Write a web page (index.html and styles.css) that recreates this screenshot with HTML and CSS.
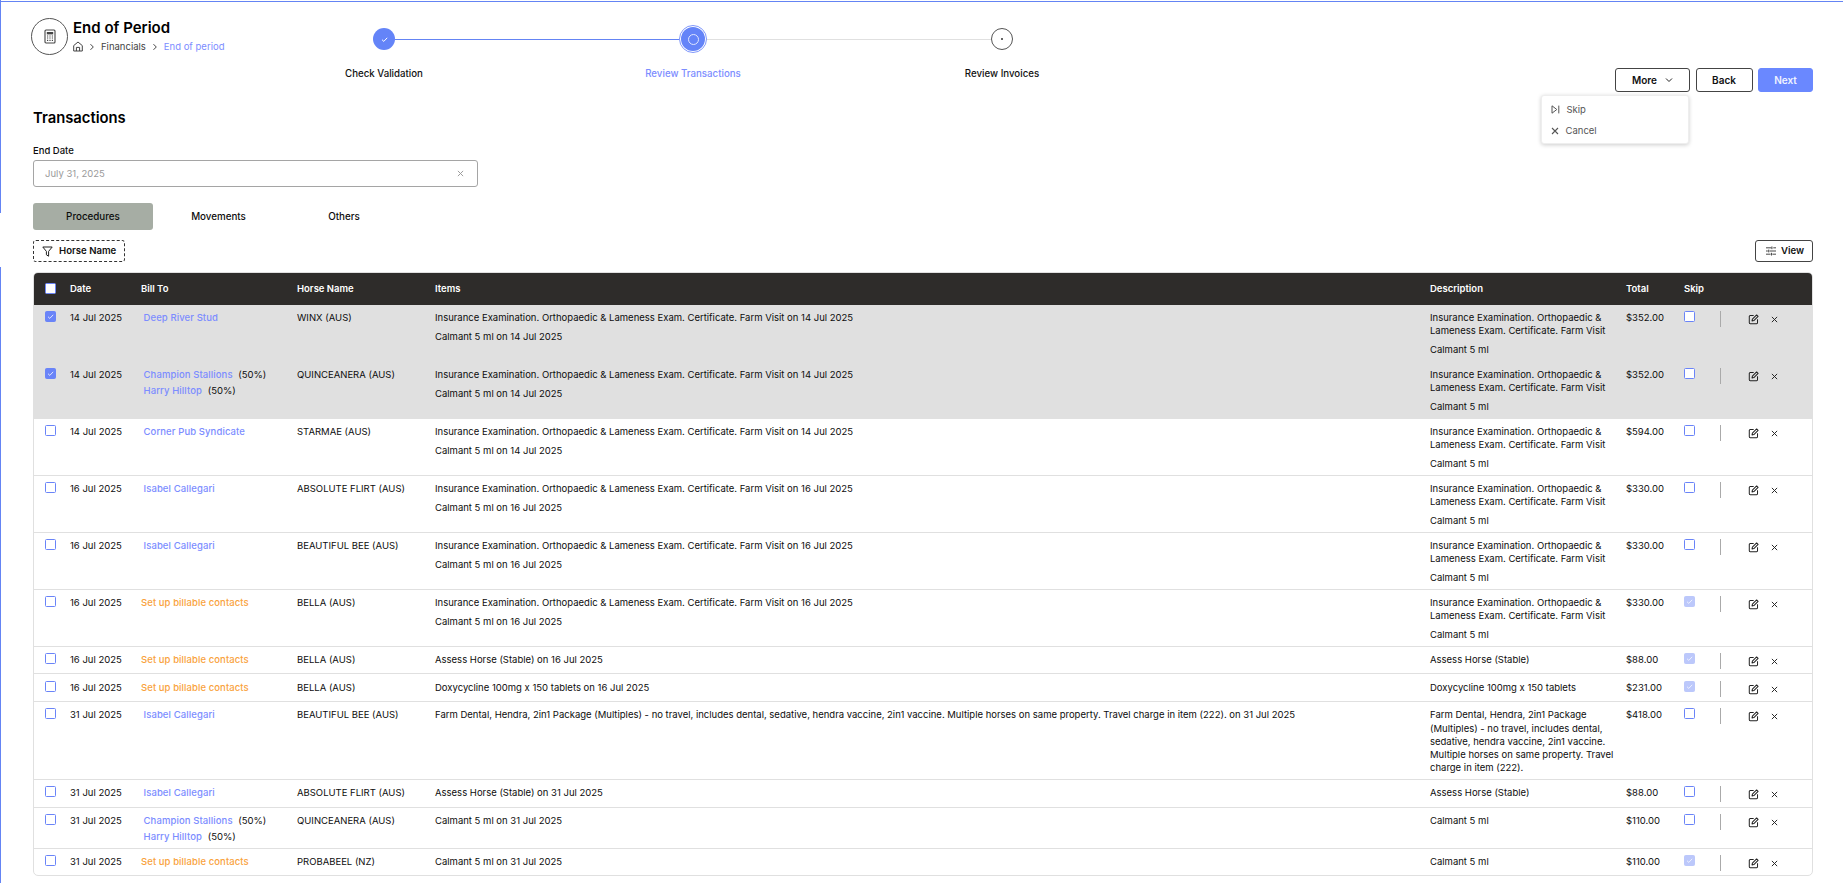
FILE: index.html
```html
<!DOCTYPE html>
<html lang="en">
<head>
<meta charset="utf-8">
<title>End of Period</title>
<link rel="stylesheet" href="styles.css">
</head>
<body>
<svg class="defs" width="0" height="0" aria-hidden="true">
  <symbol id="i-edit" viewBox="0 0 12 12"><path d="M6.2 1.6H2.4A1 1 0 0 0 1.4 2.6v7a1 1 0 0 0 1 1h7a1 1 0 0 0 1-1V5.8" fill="none" stroke="currentColor" stroke-width="1.1"/><path d="M4.4 7.6 4.8 5.6 9.4 1l1.6 1.6L6.4 7.2z" fill="none" stroke="currentColor" stroke-width="1.1" stroke-linejoin="round"/></symbol>
  <symbol id="i-x" viewBox="0 0 8 8"><path d="M1 1l6 6M7 1L1 7" fill="none" stroke="currentColor" stroke-width="1.1"/></symbol>
  <symbol id="i-check" viewBox="0 0 11 11"><path d="M3 5.7l1.8 1.7L8.2 3.8" fill="none" stroke="currentColor" stroke-width="1"/></symbol>
  <symbol id="i-chev" viewBox="0 0 8 8"><path d="M2.5 1.2 5.3 4 2.5 6.8" fill="none" stroke="currentColor" stroke-width="1"/></symbol>
</svg>
<div class="edge-top"></div>
<div class="edge-left edge-upper"></div>
<div class="edge-left edge-lower"></div>

<main class="page">
  <header class="head">
    <div class="identity">
      <div class="badge">
        <svg width="12" height="15" viewBox="0 0 12 15"><rect x="1" y="1" width="10" height="13" rx="1" fill="none" stroke="#444" stroke-width="1.1"/><rect x="2.8" y="3" width="6.4" height="2.4" fill="#444"/><path d="M3 7h1.2M5.4 7h1.2M7.8 7H9M3 9h1.2M5.4 9h1.2M7.8 9H9M3 11.4h1.2M5.4 11.4h1.2M7.8 11.4H9" stroke="#444" stroke-width="1.2"/></svg>
      </div>
      <div>
        <h1 class="page-title">End of Period</h1>
        <nav class="crumbs">
          <svg class="home" width="10" height="11" viewBox="0 0 10 11"><path d="M.7 4.6 5 1l4.3 3.6V10H.7z" fill="none" stroke="#444" stroke-width="1"/><path d="M3.4 10V6.4h3.2V10" fill="none" stroke="#444" stroke-width="1"/></svg>
          <svg class="sep" width="8" height="8"><use href="#i-chev"/></svg>
          <span>Financials</span>
          <svg class="sep" width="8" height="8"><use href="#i-chev"/></svg>
          <span class="crumb-now">End of period</span>
        </nav>
      </div>
    </div>

    <div class="stepper">
      <span class="dot dot-done"><svg width="11" height="11"><use href="#i-check"/></svg></span>
      <span class="line line-done"></span>
      <span class="dot dot-now"><span class="dot-core"><span class="dot-ring"></span></span></span>
      <span class="line"></span>
      <span class="dot dot-next"><span class="dot-pip"></span></span>
      <span class="step-label label-a">Check Validation</span>
      <span class="step-label label-b">Review Transactions</span>
      <span class="step-label label-c">Review Invoices</span>
    </div>

    <div class="actions">
      <div class="more-wrap">
        <button class="btn btn-more">More
          <svg width="8" height="6" viewBox="0 0 8 6"><path d="M1 1.5l3 3 3-3" fill="none" stroke="#222" stroke-width="1"/></svg>
        </button>
        <div class="menu">
          <div class="menu-item"><svg width="9" height="9" viewBox="0 0 9 9"><path d="M1 .8 5.8 4.5 1 8.2z M7.8 .6v7.8" fill="none" stroke="#555" stroke-width="1"/></svg>Skip</div>
          <div class="menu-item"><svg width="8" height="8"><use href="#i-x"/></svg>Cancel</div>
        </div>
      </div>
      <button class="btn btn-back">Back</button>
      <button class="btn btn-next">Next</button>
    </div>
  </header>

  <h2 class="section-title">Transactions</h2>
  <label class="field-label">End Date</label>
  <div class="date-input">
    <span>July 31, 2025</span>
    <svg width="7" height="7" viewBox="0 0 8 8"><use href="#i-x"/></svg>
  </div>

  <div class="tabs">
    <div class="tab tab-on">Procedures</div>
    <div class="tab">Movements</div>
    <div class="tab">Others</div>
  </div>

  <div class="tools">
    <button class="chip">
      <svg width="11" height="11" viewBox="0 0 11 11"><path d="M.8 1h9.4L6.6 5.4v4.8L4.4 8.8V5.4z" fill="none" stroke="#222" stroke-width="1" stroke-linejoin="round"/></svg>
      Horse Name
    </button>
    <button class="view-btn">
      <svg width="10" height="10" viewBox="0 0 11 10"><path d="M0 1.5h6M8 1.5h3M0 5h2M4 5h7M0 8.5h5M7 8.5h4M6.5 0v3M3 3.5v3M6 7v3" fill="none" stroke="#333" stroke-width="1"/></svg>
      View
    </button>
  </div>

  <div class="table-wrap">
    <table class="grid">
      <colgroup>
        <col class="c-check"><col class="c-date"><col class="c-bill"><col class="c-horse"><col class="c-items"><col class="c-desc"><col class="c-total"><col class="c-skip"><col class="c-act">
      </colgroup>
      <thead>
        <tr>
          <th class="cell-check"><span class="cb cb-head"></span></th>
          <th>Date</th><th>Bill To</th><th>Horse Name</th><th>Items</th><th>Description</th><th>Total</th><th>Skip</th><th></th>
        </tr>
      </thead>
      <tbody>
        <tr class="sel">
          <td class="cell-check"><span class="cb cb-on"><svg width="11" height="11"><use href="#i-check"/></svg></span></td>
          <td>14 Jul 2025</td>
          <td><a class="who">Deep River Stud</a></td>
          <td>WINX (AUS)</td>
          <td><p>Insurance Examination. Orthopaedic &amp; Lameness Exam. Certificate. Farm Visit on 14 Jul 2025</p><p>Calmant 5 ml on 14 Jul 2025</p></td>
          <td><p>Insurance Examination. Orthopaedic &amp; Lameness Exam. Certificate. Farm Visit</p><p>Calmant 5 ml</p></td>
          <td>$352.00</td>
          <td><span class="cb"></span></td>
          <td><div class="row-acts"><i class="rule"></i><svg class="a-edit"><use href="#i-edit"/></svg><svg class="a-x"><use href="#i-x"/></svg></div></td>
        </tr>
        <tr class="sel">
          <td class="cell-check"><span class="cb cb-on"><svg width="11" height="11"><use href="#i-check"/></svg></span></td>
          <td>14 Jul 2025</td>
          <td><div class="who-row"><a class="who">Champion Stallions</a> <span class="pct">(50%)</span></div><div class="who-row"><a class="who">Harry Hilltop</a> <span class="pct">(50%)</span></div></td>
          <td>QUINCEANERA (AUS)</td>
          <td><p>Insurance Examination. Orthopaedic &amp; Lameness Exam. Certificate. Farm Visit on 14 Jul 2025</p><p>Calmant 5 ml on 14 Jul 2025</p></td>
          <td><p>Insurance Examination. Orthopaedic &amp; Lameness Exam. Certificate. Farm Visit</p><p>Calmant 5 ml</p></td>
          <td>$352.00</td>
          <td><span class="cb"></span></td>
          <td><div class="row-acts"><i class="rule"></i><svg class="a-edit"><use href="#i-edit"/></svg><svg class="a-x"><use href="#i-x"/></svg></div></td>
        </tr>
        <tr>
          <td class="cell-check"><span class="cb"></span></td>
          <td>14 Jul 2025</td>
          <td><a class="who">Corner Pub Syndicate</a></td>
          <td>STARMAE (AUS)</td>
          <td><p>Insurance Examination. Orthopaedic &amp; Lameness Exam. Certificate. Farm Visit on 14 Jul 2025</p><p>Calmant 5 ml on 14 Jul 2025</p></td>
          <td><p>Insurance Examination. Orthopaedic &amp; Lameness Exam. Certificate. Farm Visit</p><p>Calmant 5 ml</p></td>
          <td>$594.00</td>
          <td><span class="cb"></span></td>
          <td><div class="row-acts"><i class="rule"></i><svg class="a-edit"><use href="#i-edit"/></svg><svg class="a-x"><use href="#i-x"/></svg></div></td>
        </tr>
        <tr>
          <td class="cell-check"><span class="cb"></span></td>
          <td>16 Jul 2025</td>
          <td><a class="who">Isabel Callegari</a></td>
          <td>ABSOLUTE FLIRT (AUS)</td>
          <td><p>Insurance Examination. Orthopaedic &amp; Lameness Exam. Certificate. Farm Visit on 16 Jul 2025</p><p>Calmant 5 ml on 16 Jul 2025</p></td>
          <td><p>Insurance Examination. Orthopaedic &amp; Lameness Exam. Certificate. Farm Visit</p><p>Calmant 5 ml</p></td>
          <td>$330.00</td>
          <td><span class="cb"></span></td>
          <td><div class="row-acts"><i class="rule"></i><svg class="a-edit"><use href="#i-edit"/></svg><svg class="a-x"><use href="#i-x"/></svg></div></td>
        </tr>
        <tr>
          <td class="cell-check"><span class="cb"></span></td>
          <td>16 Jul 2025</td>
          <td><a class="who">Isabel Callegari</a></td>
          <td>BEAUTIFUL BEE (AUS)</td>
          <td><p>Insurance Examination. Orthopaedic &amp; Lameness Exam. Certificate. Farm Visit on 16 Jul 2025</p><p>Calmant 5 ml on 16 Jul 2025</p></td>
          <td><p>Insurance Examination. Orthopaedic &amp; Lameness Exam. Certificate. Farm Visit</p><p>Calmant 5 ml</p></td>
          <td>$330.00</td>
          <td><span class="cb"></span></td>
          <td><div class="row-acts"><i class="rule"></i><svg class="a-edit"><use href="#i-edit"/></svg><svg class="a-x"><use href="#i-x"/></svg></div></td>
        </tr>
        <tr>
          <td class="cell-check"><span class="cb"></span></td>
          <td>16 Jul 2025</td>
          <td><a class="warn">Set up billable contacts</a></td>
          <td>BELLA (AUS)</td>
          <td><p>Insurance Examination. Orthopaedic &amp; Lameness Exam. Certificate. Farm Visit on 16 Jul 2025</p><p>Calmant 5 ml on 16 Jul 2025</p></td>
          <td><p>Insurance Examination. Orthopaedic &amp; Lameness Exam. Certificate. Farm Visit</p><p>Calmant 5 ml</p></td>
          <td>$330.00</td>
          <td><span class="cb cb-off"><svg width="11" height="11"><use href="#i-check"/></svg></span></td>
          <td><div class="row-acts"><i class="rule"></i><svg class="a-edit"><use href="#i-edit"/></svg><svg class="a-x"><use href="#i-x"/></svg></div></td>
        </tr>
        <tr>
          <td class="cell-check"><span class="cb"></span></td>
          <td>16 Jul 2025</td>
          <td><a class="warn">Set up billable contacts</a></td>
          <td>BELLA (AUS)</td>
          <td>Assess Horse (Stable) on 16 Jul 2025</td>
          <td>Assess Horse (Stable)</td>
          <td>$88.00</td>
          <td><span class="cb cb-off"><svg width="11" height="11"><use href="#i-check"/></svg></span></td>
          <td><div class="row-acts"><i class="rule"></i><svg class="a-edit"><use href="#i-edit"/></svg><svg class="a-x"><use href="#i-x"/></svg></div></td>
        </tr>
        <tr class="push-top">
          <td class="cell-check"><span class="cb"></span></td>
          <td>16 Jul 2025</td>
          <td><a class="warn">Set up billable contacts</a></td>
          <td>BELLA (AUS)</td>
          <td>Doxycycline 100mg x 150 tablets on 16 Jul 2025</td>
          <td>Doxycycline 100mg x 150 tablets</td>
          <td>$231.00</td>
          <td><span class="cb cb-off"><svg width="11" height="11"><use href="#i-check"/></svg></span></td>
          <td><div class="row-acts"><i class="rule"></i><svg class="a-edit"><use href="#i-edit"/></svg><svg class="a-x"><use href="#i-x"/></svg></div></td>
        </tr>
        <tr>
          <td class="cell-check"><span class="cb"></span></td>
          <td>31 Jul 2025</td>
          <td><a class="who">Isabel Callegari</a></td>
          <td>BEAUTIFUL BEE (AUS)</td>
          <td>Farm Dental, Hendra, 2in1 Package (Multiples) - no travel, includes dental, sedative, hendra vaccine, 2in1 vaccine. Multiple horses on same property. Travel charge in item (222). on 31 Jul 2025</td>
          <td><div class="lead">Farm Dental, Hendra, 2in1 Package</div>(Multiples) - no travel, includes dental, sedative, hendra vaccine, 2in1 vaccine. Multiple horses on same property. Travel charge in item (222).</td>
          <td>$418.00</td>
          <td><span class="cb"></span></td>
          <td><div class="row-acts"><i class="rule"></i><svg class="a-edit"><use href="#i-edit"/></svg><svg class="a-x"><use href="#i-x"/></svg></div></td>
        </tr>
        <tr class="push-bottom">
          <td class="cell-check"><span class="cb"></span></td>
          <td>31 Jul 2025</td>
          <td><a class="who">Isabel Callegari</a></td>
          <td>ABSOLUTE FLIRT (AUS)</td>
          <td>Assess Horse (Stable) on 31 Jul 2025</td>
          <td>Assess Horse (Stable)</td>
          <td>$88.00</td>
          <td><span class="cb"></span></td>
          <td><div class="row-acts"><i class="rule"></i><svg class="a-edit"><use href="#i-edit"/></svg><svg class="a-x"><use href="#i-x"/></svg></div></td>
        </tr>
        <tr>
          <td class="cell-check"><span class="cb"></span></td>
          <td>31 Jul 2025</td>
          <td><div class="who-row"><a class="who">Champion Stallions</a> <span class="pct">(50%)</span></div><div class="who-row"><a class="who">Harry Hilltop</a> <span class="pct">(50%)</span></div></td>
          <td>QUINCEANERA (AUS)</td>
          <td>Calmant 5 ml on 31 Jul 2025</td>
          <td>Calmant 5 ml</td>
          <td>$110.00</td>
          <td><span class="cb"></span></td>
          <td><div class="row-acts"><i class="rule"></i><svg class="a-edit"><use href="#i-edit"/></svg><svg class="a-x"><use href="#i-x"/></svg></div></td>
        </tr>
        <tr>
          <td class="cell-check"><span class="cb"></span></td>
          <td>31 Jul 2025</td>
          <td><a class="warn">Set up billable contacts</a></td>
          <td>PROBABEEL (NZ)</td>
          <td>Calmant 5 ml on 31 Jul 2025</td>
          <td>Calmant 5 ml</td>
          <td>$110.00</td>
          <td><span class="cb cb-off"><svg width="11" height="11"><use href="#i-check"/></svg></span></td>
          <td><div class="row-acts"><i class="rule"></i><svg class="a-edit"><use href="#i-edit"/></svg><svg class="a-x"><use href="#i-x"/></svg></div></td>
        </tr>
      </tbody>
    </table>
  </div>
</main>
</body>
</html>
```

FILE: styles.css
```css
* { box-sizing: border-box; }
html, body { margin: 0; height: 100%; }
body {
  background: #fff;
  color: #0d0d0d;
  font-family: Inter, "Liberation Sans", sans-serif;
  font-size: 9.5px;
  line-height: 13px;
  overflow: hidden;
}
.defs { position: absolute; }
.edge-top { position: absolute; left: 0; right: 0; top: 1px; height: 1px; background: #6484f4; }
.edge-left { position: absolute; left: 0; width: 1px; background: #6484f4; }
.edge-upper { top: 0; height: 213px; }
.edge-lower { top: 267px; bottom: 0; }

.page { padding: 18px 30px 0 33px; }

.head { display: flex; align-items: flex-start; }
.identity { display: flex; gap: 5px; width: 342px; margin-left: -2px; }
.badge {
  width: 37px; height: 37px; border: 1px solid #555; border-radius: 50%;
  display: flex; align-items: center; justify-content: center; flex: none;
}
.page-title { margin: 0; font-size: 15px; line-height: 20px; font-weight: 600; color: #000; }
.crumbs { display: flex; align-items: center; margin-top: 2px; font-size: 9.5px; color: #444; }
.crumbs .sep { margin: 0 5px; color: #444; }
.crumb-now { color: #7c8dff; }

.stepper {
  width: 640px; margin-top: 7px;
  display: grid;
  grid-template-columns: 22px 1fr 28px 1fr 22px;
  grid-template-rows: 28px auto;
  align-items: center;
}
.dot { border-radius: 50%; display: flex; align-items: center; justify-content: center; justify-self: center; }
.dot-done { width: 22px; height: 22px; background: #6484f8; color: #fff; }
.dot-now { width: 28px; height: 28px; border: 1px solid #7f97fb; padding: 1px; }
.dot-core { width: 100%; height: 100%; border-radius: 50%; background: #6484f8; display: flex; align-items: center; justify-content: center; }
.dot-ring { width: 11px; height: 11px; border: 1px solid #dfe5ff; border-radius: 50%; }
.dot-next { width: 22px; height: 22px; border: 1px solid #555; }
.dot-pip { width: 2px; height: 2px; background: #333; border-radius: 50%; }
.line { height: 1px; background: #e0e0e0; }
.line-done { background: #6484f4; }
.step-label {
  grid-row: 2; justify-self: center; white-space: nowrap; margin-top: 14px;
  font-size: 9.7px; font-weight: 500; color: #111;
}
.label-a { grid-column: 1; }
.label-b { grid-column: 3; color: #7c8dff; }
.label-c { grid-column: 5; }

.actions { margin-left: auto; margin-top: 50px; display: flex; gap: 5.5px; }
.btn {
  height: 24px; border: 1px solid #444; border-radius: 3px; background: #fff;
  font: 600 10px/1 Inter, "Liberation Sans", sans-serif; color: #111; padding: 0;
}
.more-wrap { position: relative; }
.btn-more { width: 75px; display: flex; align-items: center; justify-content: center; gap: 8px; }
.btn-back { width: 57px; }
.btn-next { width: 55px; background: #6a88ff; border-color: #6a88ff; color: #f0f3ff; }
.menu {
  position: absolute; right: 1px; top: 27px; width: 148px; height: 49px; z-index: 2;
  background: #fff; border: 1px solid #eee; border-radius: 3px;
  box-shadow: 0 1px 4px rgba(0,0,0,.2);
  padding: 3px 0 0 9px;
}
.menu-item { display: flex; align-items: center; gap: 6.5px; height: 21px; color: #555; font-size: 9.5px; }

.section-title { margin: 16px 0 0; font-size: 14.8px; line-height: 20px; font-weight: 600; color: #000; }
.field-label { display: block; margin-top: 16px; font-size: 9.5px; font-weight: 500; line-height: 13px; }
.date-input {
  margin-top: 3px; width: 445px; height: 27px; border: 1px solid #a5a5a5; border-radius: 3px;
  display: flex; align-items: center; justify-content: space-between; padding: 0 13px 0 11px;
  color: #9a9a9a; font-size: 9.5px;
}
.tabs { display: flex; gap: 5.5px; margin-top: 16px; }
.tab {
  width: 120px; height: 27px; display: flex; align-items: center; justify-content: center;
  border-radius: 3px; font-size: 9.8px; font-weight: 500;
}
.tab-on { background: #a6ada4; }

.tools { display: flex; justify-content: space-between; margin-top: 10px; height: 22px; }
.chip, .view-btn {
  display: flex; align-items: center; background: #fff; border-radius: 3px;
  font: 600 9.6px/1 Inter, "Liberation Sans", sans-serif; color: #111; padding: 0;
}
.chip { width: 92px; border: 1px dashed #333; gap: 6px; padding-left: 8px; }
.view-btn { width: 58px; border: 1px solid #444; gap: 5px; padding-left: 10px; }

.table-wrap {
  margin-top: 10px; border: 1px solid #e0e0e0; border-radius: 5px; overflow: hidden;
}
.grid { width: 100%; table-layout: fixed; border-collapse: separate; border-spacing: 0; }
.c-check { width: 36px; }
.c-date { width: 71px; }
.c-bill { width: 156px; }
.c-horse { width: 138px; }
.c-items { width: 995px; }
.c-desc { width: 196px; }
.c-total { width: 58px; }
.c-skip { width: 36px; }
.grid th {
  background: #2e2c2a; color: #fff; height: 32px; padding: 0 0 2px; text-align: left;
  font-size: 9.5px; font-weight: 600; vertical-align: middle;
}
.grid td {
  padding: 6px 10px 5px 0; vertical-align: top; border-bottom: 1px solid #e0e0e0;
}
.grid tr.sel td { background: #e0e0e0; border-bottom-color: #e0e0e0; }
.grid tr:last-child td { border-bottom: 0; }
.grid tr.push-top td { padding-top: 7px; }
.grid tr.push-bottom td { padding-bottom: 6px; }
.grid p { margin: 0; }
.grid p + p { margin-top: 6px; }
.lead { margin-bottom: 1px; }
.cell-check { padding-left: 11px !important; padding-right: 0 !important; }

.cb {
  display: block; width: 11px; height: 11px; background: #fff;
  border: 1px solid #6a84f8; border-radius: 1.5px;
}
.cb svg { display: block; margin: -1px; }
.cb-head { border-color: #6a84f8; }
.cb-on { background: #6a84f8; color: #dfe5ff; }
.cb-off { background: #bcc8fb; border-color: #bcc8fb; color: #eef1ff; }

.who { color: #7c8dff; margin-left: 2.5px; font-weight: 500; letter-spacing: .1px; }
.warn { color: #f9a23c; font-weight: 500; letter-spacing: .08px; }
.who-row + .who-row { margin-top: 3px; }
.pct { margin-left: 3px; }

.row-acts { display: flex; align-items: flex-start; height: 15px; color: #222; margin-right: -10px; }
.rule { width: 1px; height: 16px; background: #aaa; flex: none; }
.a-edit { width: 11px; height: 11px; margin-left: 26.5px; margin-top: 3px; }
.a-x { width: 7px; height: 7px; margin-left: 12.5px; margin-top: 5px; }
```
